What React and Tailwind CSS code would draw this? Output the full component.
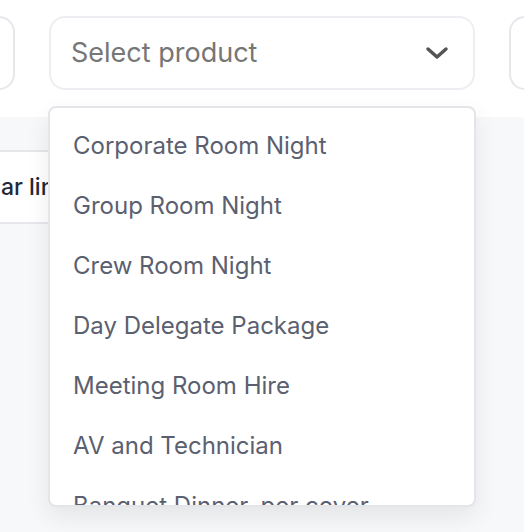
import React from 'react';

const products = [
    "Corporate Room Night",
    "Group Room Night",
    "Crew Room Night",
    "Day Delegate Package",
    "Meeting Room Hire",
    "AV and Technician",
    "Banquet Dinner, per cover",
];

const App = () => {
    return (
        <div className="relative w-[524px] h-[532px] overflow-hidden bg-[#f7f8f9] font-['Inter',sans-serif]">
            {/* top filter bar */}
            <div className="h-[117px] bg-white flex items-start pt-4 gap-[34px] -ml-[20px]">
                <div className="w-[35px] h-[74px] rounded-2xl border-2 border-[#e5e7eb] bg-white shrink-0"></div>
                <div className="w-[426px] h-[74px] rounded-2xl border-2 border-[#eceef1] bg-white shrink-0 flex items-center justify-between pl-[20px] pr-[24px]">
                    <span className="text-[27px] text-[#767676]">Select product</span>
                    <svg width="24" height="14" viewBox="0 0 24 14" fill="none">
                        <polyline points="3,3 12,11 21,3" stroke="#555555" strokeWidth="3.5" strokeLinecap="round" strokeLinejoin="round" />
                    </svg>
                </div>
                <div className="w-[60px] h-[74px] rounded-2xl border-2 border-[#e5e7eb] bg-white shrink-0"></div>
            </div>

            {/* row behind the menu */}
            <div className="mt-[33px] w-[352px] h-[74px] bg-white border-y-2 border-[#e5e7eb] flex items-center justify-end -ml-[252px]">
                <span className="text-[23px] font-medium text-[#1f2937] whitespace-nowrap mr-[32px]">Add similar line</span>
            </div>

            {/* dropdown menu */}
            <div className="absolute left-[48px] top-[106px] w-[428px] h-[401px] bg-white rounded-lg border-2 border-[#e3e5e8] shadow-[0_10px_25px_rgba(0,0,0,0.08)] overflow-hidden">
                <ul className="pt-[8px]">
                    {products.map(p => (
                        <li key={p} className="h-[60px] flex items-center pl-[23px] text-[24px] text-[#5b6070] whitespace-nowrap">
                            {p}
                        </li>
                    ))}
                </ul>
            </div>
        </div>
    );
};

export default App;
